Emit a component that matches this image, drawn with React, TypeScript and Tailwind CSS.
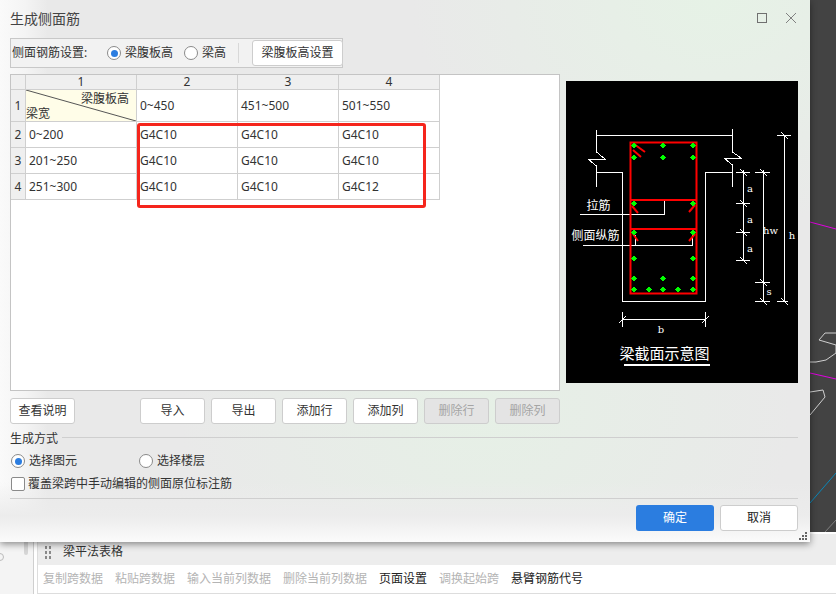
const FONT = "font-['Noto_Sans','Noto_Sans_CJK_SC',sans-serif]";

const HEAD_COLS = ['1', '2', '3', '4'];

const ROWS = [
  { no: '2', label: '0~200', cells: ['G4C10', 'G4C10', 'G4C10'] },
  { no: '3', label: '201~250', cells: ['G4C10', 'G4C10', 'G4C10'] },
  { no: '4', label: '251~300', cells: ['G4C10', 'G4C10', 'G4C12'] },
];

const TOOL_ITEMS = [
  { text: '复制跨数据', on: false },
  { text: '粘贴跨数据', on: false },
  { text: '输入当前列数据', on: false },
  { text: '删除当前列数据', on: false },
  { text: '页面设置', on: true },
  { text: '调换起始跨', on: false },
  { text: '悬臂钢筋代号', on: true },
];

const DOTS: [number, number][] = [
  [633, 145], [662, 145], [692, 145],
  [633, 157], [662, 157], [692, 157],
  [633, 203], [692, 203],
  [633, 232], [692, 232],
  [633, 258], [692, 258],
  [633, 278], [662, 278], [692, 278],
  [633, 289], [648, 289], [662, 289], [677, 289], [692, 289],
];

function Radio({ checked, label }: { checked?: boolean; label: string }) {
  return (
    <div className="flex items-center gap-[4px] shrink-0">
      <span className="w-[14px] h-[14px] shrink-0 rounded-full border border-[#8a8a8a] bg-white flex items-center justify-center">
        {checked && <span className="w-[7px] h-[7px] rounded-full bg-[#2b7de0]" />}
      </span>
      <span className="text-[12px] leading-[16px] text-[#333] whitespace-nowrap">{label}</span>
    </div>
  );
}

function Btn({ label, disabled, w = 'w-[65px]' }: { label: string; disabled?: boolean; w?: string }) {
  return (
    <div
      className={`${w} h-[26px] rounded-[3px] border border-[#cdcdcd] flex items-center justify-center text-[12px] ${
        disabled ? 'bg-[#e4e4e4] text-[#a5a5a5]' : 'bg-white text-[#333]'
      }`}
    >
      {label}
    </div>
  );
}

function BeamDiagram() {
  return (
    <svg className="w-[232px] h-[302px] shrink-0 bg-black" viewBox="566 81 232 302" shapeRendering="crispEdges">
      <g fill="none" stroke="#fff" strokeWidth="1">
        <path d="M596.5 135.5H732.5" />
        <path d="M596.5 130V152L605.5 159.5H588.5L596.5 166V187" />
        <path d="M732.5 129V152L741.5 158.5H724.5L732.5 165V187" />
        <path d="M596.5 172.5H622.5V301.5H705.5V172.5H732.5" />
        <path d="M580 214.5H664.5V200" />
        <path d="M583 245.5H692.5V233M635.5 245V235" />
        {/* dimensions */}
        <path d="M743.5 170V260M736 172.5H750M736 203.5H750M736 232.5H750M736 260.5H750" />
        <path d="M763.5 170V302M755 172.5H770M755 282.5H770M755 301.5H770" />
        <path d="M784.5 135V302M777 135.5H791M777 301.5H788" />
        <path d="M622.5 312V327M705.5 312V327M622.5 319.5H705.5" />
        <path d="M740 169L747 176M740 200L747 207M740 229L747 236M740 257L747 264M760 169L767 176M760 279L767 286M760 298L767 305M781 132L788 139M781 298L788 305M619 323L626 316M702 323L709 316" />
      </g>
      <g fill="none" stroke="#f00" strokeWidth="2" shapeRendering="auto">
        <path d="M630.5 142.5H696.5V293.5H630.5Z" />
        <path d="M630.5 200H696.5M630.5 229H696.5" />
        <path d="M634 144L645 152M633 150L641 157M632 206L638 213M695 205L689 212M633 234L638 241M695 234L689 241" />
      </g>
      <g fill="#0f0">
        {DOTS.map(([x, y]) => (
          <path key={`${x}-${y}`} d={`M${x + 0.5} ${y - 2.5}L${x + 3.5} ${y + 0.5}L${x + 0.5} ${y + 3.5}L${x - 2.5} ${y + 0.5}Z`} />
        ))}
      </g>
      <g fill="#fff" fontFamily="'Noto Sans CJK SC',sans-serif" textAnchor="middle">
        <text x="598.5" y="209.5" fontSize="12">拉筋</text>
        <text x="595.5" y="240" fontSize="12">侧面纵筋</text>
        <text x="664.5" y="358.5" fontSize="15">梁截面示意图</text>
      </g>
      <g fill="#fff" fontFamily="'DejaVu Serif',serif" fontSize="10" textAnchor="middle">
        <text x="750" y="192">a</text>
        <text x="750" y="223">a</text>
        <text x="750" y="252">a</text>
        <text x="770.5" y="234">hw</text>
        <text x="769" y="295">s</text>
        <text x="792" y="239">h</text>
        <text x="661" y="333">b</text>
      </g>
      <rect x="624" y="364" width="86" height="2" fill="#fff" />
    </svg>
  );
}

function SpecTable() {
  return (
    <div className="relative w-[550px] h-[317px] shrink-0 bg-white border border-[#c4c4c4]">
      <div className="grid grid-cols-[15px_111px_101px_101px_101px] grid-rows-[15px_32px_26px_26px_26px] w-[429px] text-[12px] text-[#333]">
        {/* head row */}
        <div className="bg-[#efefef] border-r border-b border-[#cfcfcf]" />
        {HEAD_COLS.map((c) => (
          <div key={c} className="bg-[#efefef] border-r border-b border-[#cfcfcf] flex items-center justify-center leading-none">
            {c}
          </div>
        ))}

        {/* row 1 */}
        <div className="bg-[#efefef] border-r border-b border-[#cfcfcf] flex items-center justify-center">1</div>
        <div className="relative bg-[#fffde8] border-r border-b border-[#cfcfcf] flex flex-col justify-between leading-[15px] pr-[7px]">
          <svg className="absolute inset-0 w-full h-full" viewBox="0 0 110 31" preserveAspectRatio="none">
            <path d="M0 0L110 31" stroke="#555" strokeWidth="1" fill="none" />
          </svg>
          <span className="self-end mt-[1px]">梁腹板高</span>
          <span className="self-start">梁宽</span>
        </div>
        {['0~450', '451~500', '501~550'].map((t) => (
          <div key={t} className="border-r border-b border-[#cfcfcf] flex items-center pl-[3px]">
            {t}
          </div>
        ))}

        {/* data rows */}
        {ROWS.map((r) => (
          <div key={r.no} className="contents">
            <div className="bg-[#efefef] border-r border-b border-[#cfcfcf] flex items-center justify-center">{r.no}</div>
            <div className="border-r border-b border-[#cfcfcf] flex items-center pl-[3px]">{r.label}</div>
            {r.cells.map((c, i) => (
              <div key={i} className="border-r border-b border-[#cfcfcf] flex items-center pl-[3px]">
                {c}
              </div>
            ))}
          </div>
        ))}
      </div>
      {/* red highlight drawn over the table */}
      <div className="absolute left-[126px] top-[48px] w-[289px] h-[85px] rounded-[3px] border-[3px] border-[#f5251c]" />
    </div>
  );
}

function Dialog() {
  return (
    <div className="absolute left-0 top-0 w-[810px] h-[542px] pl-[10px] pr-[12px] flex flex-col shadow-[0_2px_7px_rgba(0,0,0,0.45)] bg-[linear-gradient(0deg,#fbfbfb_0px,#ececec_26px,transparent_60px),linear-gradient(90deg,#fafafa_0px,#f4f4f4_25px,transparent_48px),radial-gradient(ellipse_at_60%_75%,#e6f0e6_0px,transparent_45%),radial-gradient(ellipse_at_88%_0%,#e6f2e6_0px,transparent_30%),linear-gradient(#e9e9e9,#e9e9e9)]">
      {/* title bar */}
      <div className="h-[38px] shrink-0 flex items-center justify-between pb-[2px]">
        <span className="text-[14px] text-[#444]">生成侧面筋</span>
        <div className="flex items-center gap-[18px] pr-[1px]">
          <span className="w-[10px] h-[10px] border border-[#707070]" />
          <svg className="w-[12px] h-[12px]" viewBox="0 0 12 12" fill="none" stroke="#808080" strokeWidth="1">
            <path d="M1 1L11 11M11 1L1 11" />
          </svg>
        </div>
      </div>

      {/* rebar setting group */}
      <div className="w-[333px] h-[30px] shrink-0 border border-[#c8c8c8] bg-[#f2f2f2] flex items-center pl-[1px]">
        <span className="text-[12px] text-[#333] w-[95px] shrink-0">侧面钢筋设置:</span>
        <Radio checked label="梁腹板高" />
        <div className="w-[11px] shrink-0" />
        <Radio label="梁高" />
        <div className="w-px h-[20px] bg-[#d8d8d8] ml-[12px] mr-[13px] shrink-0" />
        <Btn label="梁腹板高设置" w="w-[91px] shrink-0" />
      </div>

      {/* table + diagram */}
      <div className="flex mt-[6px] h-[317px] shrink-0">
        <SpecTable />
        <div className="ml-[6px] mt-[7px]">
          <BeamDiagram />
        </div>
      </div>

      {/* table buttons */}
      <div className="flex items-center mt-[7px] h-[26px] shrink-0">
        <Btn label="查看说明" />
        <div className="flex gap-[6px] ml-[65px]">
          <Btn label="导入" />
          <Btn label="导出" />
          <Btn label="添加行" />
          <Btn label="添加列" />
          <Btn label="删除行" disabled />
          <Btn label="删除列" disabled />
        </div>
      </div>

      {/* generate mode */}
      <div className="flex items-center mt-[6px] h-[17px] shrink-0">
        <span className="text-[12px] text-[#333]">生成方式</span>
        <div className="flex-1 h-px bg-[#cfcfcf] ml-[4px] -mt-[2px]" />
      </div>
      <div className="flex items-center mt-[5px] h-[18px] shrink-0 pl-px">
        <div className="w-[128px]">
          <Radio checked label="选择图元" />
        </div>
        <Radio label="选择楼层" />
      </div>
      <div className="flex items-center gap-[3px] mt-[6px] h-[16px] shrink-0 pl-px">
        <span className="w-[14px] h-[14px] rounded-[2px] border border-[#8a8a8a] bg-white" />
        <span className="text-[12px] text-[#333]">覆盖梁跨中手动编辑的侧面原位标注筋</span>
      </div>
      <div className="h-px bg-[#cfcfcf] mt-[6px] shrink-0" />

      {/* footer */}
      <div className="flex justify-end gap-[6px] mt-[6px]">
        <div className="w-[78px] h-[26px] rounded-[3px] bg-[#2b7de0] text-white text-[12px] flex items-center justify-center">确定</div>
        <div className="w-[78px] h-[26px] rounded-[3px] border border-[#cdcdcd] bg-white text-[#222] text-[12px] flex items-center justify-center">取消</div>
      </div>

      {/* resize grip */}
      <svg className="absolute right-[3px] bottom-[2px] w-[8px] h-[8px]" viewBox="0 0 8 8" fill="#666">
        <rect x="6" y="0" width="2" height="2" />
        <rect x="3" y="3" width="2" height="2" />
        <rect x="6" y="3" width="2" height="2" />
        <rect x="0" y="6" width="2" height="2" />
        <rect x="3" y="6" width="2" height="2" />
        <rect x="6" y="6" width="2" height="2" />
      </svg>
    </div>
  );
}

export default function App() {
  return (
    <div className={`relative w-[836px] h-[594px] overflow-hidden bg-white ${FONT}`}>
      {/* CAD canvas behind the dialog */}
      <div className="h-[532px] bg-[#434343] flex justify-end">
        <svg className="w-[26px] h-[532px]" viewBox="810 0 26 532" fill="none">
          <path d="M810 222L836 229M810 373L836 379" stroke="#e000e0" strokeWidth="1" />
          <path d="M810 362H816L826 360L836 353V345L819 340L825 333H836" stroke="#cfcfcf" strokeWidth="1" />
          <path d="M810 415L825 397L823 390L810 392" stroke="#cfcfcf" strokeWidth="1" />
          <path d="M810 503L836 473" stroke="#0a86b8" strokeWidth="1" />
          <path d="M825 532L836 520" stroke="#808080" strokeWidth="1" />
        </svg>
      </div>

      {/* beam table panel */}
      <div className="h-[62px] flex">
        <div className="relative w-[34px] bg-[#f4f4f4] border-r border-[#cfcfcf]">
          <div className="absolute left-[24px] top-[4px] w-[4px] h-[19px] rounded-full bg-[#d5d5d5]" />
          <div className="absolute -left-[4px] top-[21px] w-[8px] h-[8px] rounded-full border border-[#bbbbbb]" />
        </div>
        <div className="flex-1 ml-[3px] border-l border-b border-[#dddddd] flex flex-col">
          <div className="h-[33px] bg-[#ededed] border-t-2 border-white flex items-end pb-[5px] pl-[6px]">
            <div className="grid grid-cols-2 gap-x-[2px] gap-y-[2px] mb-[1px] pl-px">
              {[0, 1, 2, 3, 4, 5].map((i) => (
                <span key={i} className="w-[2px] h-[3px] bg-[#8a8a8a]" />
              ))}
            </div>
            <span className="text-[12px] text-[#333] ml-[12px] leading-[17px]">梁平法表格</span>
          </div>
          <div className="flex-1 bg-white flex items-center pl-[5px] gap-[12px]">
            {TOOL_ITEMS.map((it) => (
              <span key={it.text} className={`text-[12px] ${it.on ? 'text-[#222]' : 'text-[#b4b4b4]'}`}>
                {it.text}
              </span>
            ))}
          </div>
        </div>
      </div>

      <Dialog />
    </div>
  );
}
